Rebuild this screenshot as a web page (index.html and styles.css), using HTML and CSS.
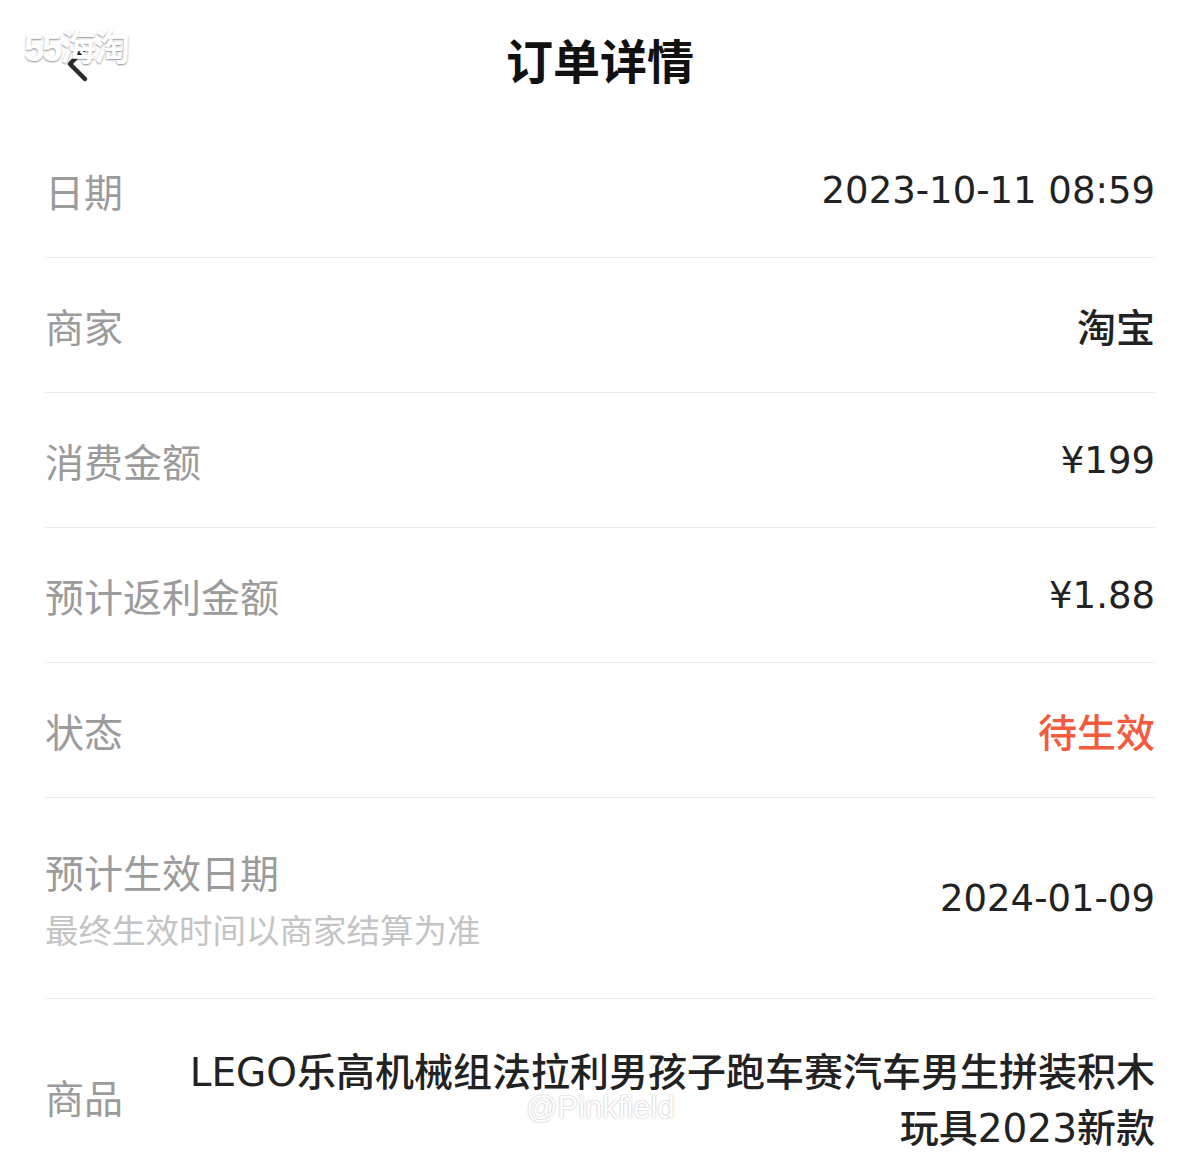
FILE: index.html
```html
<!DOCTYPE html>
<html>
  <head>
    <title>订单详情</title>
    <link rel="stylesheet" href="styles.css">
  </head>
  <body>
    <div class="page">
      <div class="header">
        <a class="back">
          <svg width="28" height="40" viewBox="0 0 28 40">
            <polyline points="20,4 6,19 21,34" fill="none" stroke="#2a2a2a" stroke-width="4.5" stroke-linecap="round" stroke-linejoin="round"/>
          </svg>
        </a>
        <h1>订单详情</h1>
      </div>
      <div class="list">
        <div class="row">
          <span class="label">日期</span>
          <span class="value">2023-10-11 08:59</span>
        </div>
        <div class="row">
          <span class="label">商家</span>
          <span class="value value-cjk">淘宝</span>
        </div>
        <div class="row">
          <span class="label">消费金额</span>
          <span class="value">¥199</span>
        </div>
        <div class="row">
          <span class="label">预计返利金额</span>
          <span class="value">¥1.88</span>
        </div>
        <div class="row">
          <span class="label">状态</span>
          <span class="value value-cjk status-pending">待生效</span>
        </div>
        <div class="row row-tall">
          <div class="label-group">
            <span class="label">预计生效日期</span>
            <span class="hint">最终生效时间以商家结算为准</span>
          </div>
          <span class="value">2024-01-09</span>
        </div>
        <div class="row row-goods">
          <span class="label">商品</span>
          <span class="value goods-name">LEGO乐高机械组法拉利男孩子跑车赛汽车男生拼装积木玩具2023新款</span>
        </div>
      </div>
    </div>
    <div class="mark mark-top">55海淘</div>
    <div class="mark mark-bottom">@Pinkfield</div>
  </body>
</html>
```

FILE: styles.css
```css
body {
  margin: 0;
  background: #fff;
  font-family: "DejaVu Sans", "Noto Sans CJK SC", sans-serif;
  color: #222;
}

.page {
  width: 1200px;
  height: 1157px;
  overflow: hidden;
}

.header {
  height: 123px;
  display: flex;
  align-items: center;
  justify-content: center;
  position: relative;
}

.back {
  position: absolute;
  left: 64px;
  top: 45px;
}

h1 {
  margin: 0 0 6px 0;
  font-size: 47px;
  font-weight: 700;
  color: #111;
  font-family: "Noto Sans CJK SC", sans-serif;
}

.list {
  padding: 0 45px;
}

.row {
  height: 134px;
  display: flex;
  align-items: center;
  justify-content: space-between;
  border-bottom: 1px solid #ebebeb;
}

.label {
  font-size: 39px;
  color: #9b9b9b;
  font-family: "Noto Sans CJK SC", sans-serif;
  font-weight: 400;
  white-space: nowrap;
  flex-shrink: 0;
}

.value {
  font-size: 37px;
  font-weight: 500;
  color: #222;
  text-align: right;
}

.value-cjk {
  font-size: 39px;
}

.status-pending {
  color: #f45a3d;
}

.row-tall {
  height: 200px;
}

.label-group {
  display: flex;
  flex-direction: column;
}

.hint {
  font-size: 33.5px;
  color: #c4c4c4;
  font-family: "Noto Sans CJK SC", sans-serif;
  margin-top: 5px;
}

.row-goods {
  height: auto;
  border-bottom: none;
  padding-top: 46px;
  align-items: center;
}

.row-goods .label {
  margin-bottom: 10px;
}

.goods-name {
  margin-left: 60px;
  line-height: 56px;
  font-size: 39px;
}

.mark {
  position: absolute;
  color: #fff;
  font-family: "Liberation Sans", "Noto Sans CJK SC", sans-serif;
  text-shadow: 0 1px 2px rgba(0, 0, 0, 0.45);
}

.mark-top {
  left: 24px;
  top: 19px;
  font-size: 36px;
  font-weight: 700;
  letter-spacing: -2px;
}

.mark-bottom {
  left: 526px;
  top: 1090px;
  font-size: 31px;
  text-shadow: 0 0 2px rgba(0, 0, 0, 0.35);
}
```
